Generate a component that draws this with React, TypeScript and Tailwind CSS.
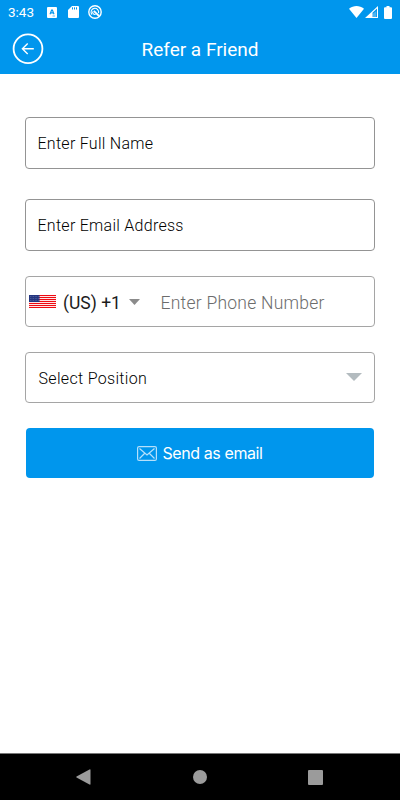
import React from 'react';

const StatusBar: React.FC = () => (
  <div className="flex h-6 items-center justify-between pl-[8px] pr-[8px] text-white">
    <div className="flex items-center">
      <span className="w-[39px] text-[13.5px] leading-6">3:43</span>
      <svg width="10" height="11" viewBox="0 0 10 11" className="mr-[11px]">
        <rect width="10" height="11" rx="1" fill="#fff" />
        <path d="M3 7.2 4.6 3h.8L7 7.2M3.6 5.9h2.8" fill="none" stroke="#0096ed" strokeWidth="1.1" />
        <path d="M5.5 9h2.5" stroke="#0096ed" strokeWidth=".6" />
      </svg>
      <svg width="11" height="12" viewBox="0 0 11 12" className="mr-[9px]">
        <path d="M4 0h6a1 1 0 0 1 1 1v10a1 1 0 0 1-1 1H1a1 1 0 0 1-1-1V4z" fill="#fff" />
        <path d="M4.5 1.3v2.2M6.5 1.3v2.2M8.5 1.3v2.2" stroke="#0096ed" strokeWidth="1" />
      </svg>
      <svg width="14" height="14" viewBox="0 0 14 14" fill="none" stroke="#fff">
        <circle cx="7" cy="7" r="6.2" strokeWidth="1.4" />
        <path d="M4 9.6a3.8 3.8 0 1 1 6.5-1.4" strokeWidth="1.1" />
        <path d="M5.8 5.9 11 11" strokeWidth="1.8" />
        <path d="M4.6 6.5c-.2 2 1.2 3.3 3 2.9" strokeWidth="1.1" />
      </svg>
    </div>
    <div className="flex items-center">
      <svg width="15" height="12" viewBox="0 0 15 12" className="mr-[1px]">
        <path d="M0 2.8C4.5-.9 10.5-.9 15 2.8L7.5 12z" fill="#fff" />
      </svg>
      <svg width="13" height="12" viewBox="0 0 13 12" className="mr-[6px]">
        <path fillRule="evenodd" d="M13 0v12H0zM7.5 6.8V11H12V2.5z" fill="#fff" />
        <path d="M11.3 5v6H7.5V8z" fill="#fff" opacity=".3" />
      </svg>
      <svg width="8" height="13" viewBox="0 0 8 13">
        <path d="M2.5 0h3v1.3H7a1 1 0 0 1 1 1V12a1 1 0 0 1-1 1H1a1 1 0 0 1-1-1V2.3a1 1 0 0 1 1-1h1.5z" fill="#fff" />
      </svg>
    </div>
  </div>
);

const Header: React.FC = () => (
  <div className="grid h-[50px] grid-cols-[60px_1fr_60px] items-center text-white">
    <button className="ml-[12px] size-[32px]">
      <svg width="32" height="32" viewBox="0 0 32 32" fill="none" stroke="#fff">
        <circle cx="16" cy="15.8" r="14.4" strokeWidth="1.8" />
        <path d="M21.8 15.8H10.7M15.7 10.5 10.4 15.8l5.3 5.3" strokeWidth="1.4" />
      </svg>
    </button>
    <h1 className="pt-px text-center text-[19px] leading-6">Refer a Friend</h1>
  </div>
);

const UsFlag: React.FC = () => (
  <svg width="27" height="13" viewBox="0 0 27 13">
    <rect width="27" height="13" fill="#fff" />
    {[0, 1, 2, 3, 4, 5, 6].map((i) => (
      <rect key={i} y={i * 2} width="27" height="1.1" fill="#ee0a12" />
    ))}
    <rect width="10.5" height="7" fill="#23357f" />
    <path d="M1 1.5h9M1 3.5h9M1 5.5h9" stroke="#7480b0" strokeWidth=".6" strokeDasharray=".8 .8" />
  </svg>
);

const App: React.FC = () => {
  return (
    <div className="flex h-[800px] w-[400px] flex-col overflow-hidden bg-white font-['Roboto',sans-serif]">
      <header className="h-[74px] shrink-0 bg-[#0096ed]">
        <StatusBar />
        <Header />
      </header>

      <main className="flex flex-1 flex-col px-[25px] pt-[43px]">
        <div className="flex h-[52px] items-center rounded-[4px] border border-[#949494] pl-[11.5px] pt-[1.5px] text-[16px] font-light tracking-[0.27px] text-black">
          <span>Enter Full Name</span>
        </div>
        <div className="mt-[30px] flex h-[52px] items-center rounded-[4px] border border-[#949494] pl-[11.5px] pt-[1.5px] text-[16px] font-light tracking-[0.27px] text-black">
          <span>Enter Email Address</span>
        </div>
        <div className="mt-[25px] flex h-[51px] items-center rounded-[4px] border border-[#a5a5a5] pl-[3px]">
          <UsFlag />
          <span className="ml-[7px] w-[66px] whitespace-nowrap pt-[3px] text-[17.5px] text-[#1c1c1c]">(US) +1</span>
          <svg width="11" height="6" viewBox="0 0 11 6">
            <path d="M0 0h11L5.5 6z" fill="#8b8b8b" />
          </svg>
          <span className="ml-[20.5px] whitespace-nowrap pt-[3px] text-[17.5px] font-light tracking-[0.25px] text-[#6c6c6c]">Enter Phone Number</span>
        </div>
        <div className="mt-[25px] flex h-[51px] items-center justify-between rounded-[4px] border border-[#a5a5a5] pl-[12.5px] pr-[12px] text-[16px] text-black">
          <span className="pt-[2px] font-light tracking-[0.32px]">Select Position</span>
          <svg width="16" height="8" viewBox="0 0 16 8" className="-mt-px">
            <path d="M0 0h16L8 8z" fill="#b3bbbf" />
          </svg>
        </div>
        <button className="mx-[1px] mt-[25px] flex h-[50px] items-center justify-center rounded-[4px] bg-[#0096ed] text-white">
          <svg width="20" height="15" viewBox="0 0 20 15" fill="none" stroke="#b5e0fb" strokeWidth="1.2" className="mr-[5px]">
            <rect x=".6" y=".6" width="18.8" height="13.8" rx="1.5" />
            <path d="M2.5 2.5 10 9l7.5-6.5M2.5 12.5l5-5M17.5 12.5l-5-5" />
          </svg>
          <span className="font-['Inter',sans-serif] text-[16px] tracking-[-0.4px]">Send as email</span>
        </button>
      </main>

      <nav className="flex h-[47px] shrink-0 items-center justify-between border-t border-[#777] bg-black pl-[76px] pr-[77px]">
        <svg width="15" height="16" viewBox="0 0 15 16">
          <path d="M14.5 1v14q0 1-1 .5L.5 8.5Q0 8 .5 7.5L13.5.5q1-.5 1 .5" fill="#9b9b9b" />
        </svg>
        <span className="size-[14px] rounded-full bg-[#9b9b9b]" />
        <span className="size-[15px] rounded-[1px] bg-[#9b9b9b]" />
      </nav>
    </div>
  );
};

export default App;
